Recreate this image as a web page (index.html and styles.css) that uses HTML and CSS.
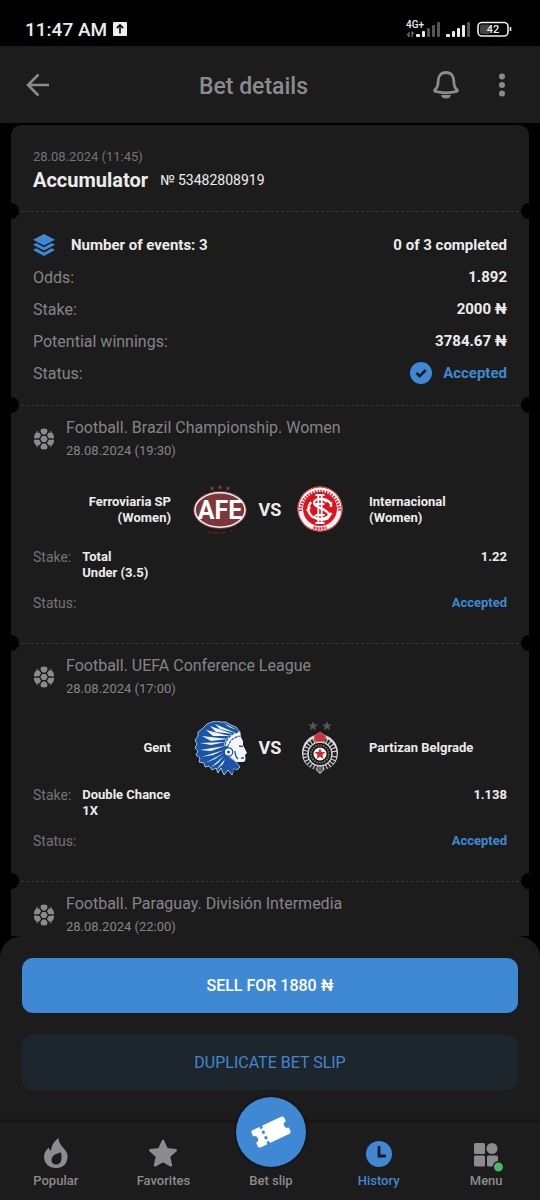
FILE: index.html
```html
<!DOCTYPE html>
<html lang="en">
<head>
    <meta charset="utf-8">
    <meta name="viewport" content="width=device-width, initial-scale=1">
    <title>Bet details</title>
    <link rel="stylesheet" href="styles.css">
</head>
<body>
    <!-- shared icons -->
    <svg class="defs" width="0" height="0" aria-hidden="true">
        <symbol id="ball" viewBox="0 0 22 22">
            <circle cx="11" cy="11" r="10.4" fill="#8b8b8d"/>
            <path d="M8.800 7.200h4.400L15.400 11l-2.200 3.800H8.800L6.600 11z" fill="none" stroke="#1c1c1c" stroke-width="1.400"/>
            <path d="M8.800 7.200 7 4.100M13.200 7.200 15 4.100M15.400 11H19M13.200 14.800l1.800 3.100M8.800 14.800 7 17.900M6.600 11H3" stroke="#1c1c1c" stroke-width="1.400"/>
            <path d="M7.300 4.500 8.200 0H6L4.500 5zM14.700 4.500 13.800 0H16l1.500 5zM18.500 11 22 9.500v3zM14.700 17.500l-.9 4.500H16l1.500-5zM7.300 17.500 8.200 22H6l-1.500-5zM3.500 11 0 9.500v3z" fill="#1c1c1c"/>
        </symbol>
    </svg>

    <div class="statusbar">
        <span class="clock">11:47 AM</span>
        <svg width="14" height="14" viewBox="0 0 14 14" aria-hidden="true">
            <rect width="14" height="14" rx="1" fill="#eee"/>
            <path d="M7 11.5V3M3.8 6.2 7 3l3.2 3.2" fill="none" stroke="#111" stroke-width="1.7"/>
        </svg>
        <svg class="signal" width="106" height="20" viewBox="0 0 106 20" aria-hidden="true">
            <text x="0" y="9" class="net">4G+</text>
            <path d="M3 18v-5M1.2 15 3 17.5M6 12.5V18M6 12.5 7.8 15" stroke="#777" stroke-width="1.2"/>
            <g fill="#eee">
                <rect x="10" y="15" width="4" height="3" rx="1"/><rect x="16" y="12" width="3" height="6" rx="1"/>
                <rect x="40" y="15" width="4" height="3" rx="1"/><rect x="46" y="12" width="3" height="6" rx="1"/>
                <rect x="51" y="9" width="3" height="9" rx="1"/><rect x="56" y="6" width="3" height="12" rx="1"/>
            </g>
            <g fill="#555">
                <rect x="21" y="9" width="3" height="9" rx="1"/><rect x="26" y="6" width="3" height="12" rx="1"/>
                <rect x="31" y="3" width="3" height="15" rx="1"/><rect x="61" y="3" width="3" height="15" rx="1"/>
            </g>
            <rect x="72" y="3.5" width="30" height="13.5" rx="4" fill="none" stroke="#eee" stroke-width="1.6"/>
            <rect x="74" y="5.5" width="10" height="9.500" rx="2" fill="#444"/>
            <path d="M104.500 8v4" stroke="#eee" stroke-width="1.6"/>
            <text x="87" y="14" class="charge">42</text>
        </svg>
    </div>

    <header class="topbar">
        <button class="icon-btn" aria-label="Back">
            <svg width="24" height="24" viewBox="0 0 24 24"><path d="M23 12H2M12.500 1.500 2 12l10.500 10.500" fill="none" stroke="#8b8b8d" stroke-width="2.6"/></svg>
        </button>
        <h1>Bet details</h1>
        <div class="actions">
            <button class="icon-btn" aria-label="Notifications">
                <svg width="28" height="30" viewBox="0 0 28 30"><path d="M14 2.500C9 2.500 6.200 6 6.200 11c0 5-.7 7-3.600 9.200 0 .6 0 1 .6 1.200 7 1.800 14.600 1.800 21.600 0 .6-.2.6-.6.6-1.200-2.900-2.200-3.600-4.200-3.600-9.200 0-5-2.800-8.500-7.800-8.500z" fill="none" stroke="#8b8b8d" stroke-width="2.8" stroke-linejoin="round"/><path d="M9 25h10c-.5 2.500-2 3.500-5 3.500S9.500 27.500 9 25z" fill="#8b8b8d"/></svg>
            </button>
            <button class="icon-btn" aria-label="More">
                <svg width="8" height="24" viewBox="0 0 8 24" fill="#8b8b8d"><circle cx="4" cy="3.500" r="3"/><circle cx="4" cy="12" r="3"/><circle cx="4" cy="20.500" r="3"/></svg>
            </button>
        </div>
    </header>

    <main class="slip">
        <section class="slip-head">
            <time>28.08.2024 (11:45)</time>
            <div class="slip-title"><h2>Accumulator</h2><span>№ 53482808919</span></div>
        </section>

        <section class="summary notched">
            <div class="row row-events">
                <svg width="22" height="22" viewBox="0 0 22 22" fill="#3f88d4" aria-hidden="true">
                    <path d="M11 0 22 5.800 11 11.600 0 5.800z"/>
                    <path d="M0 10.800 3.200 9.100 11 13.200l7.800-4.100 3.200 1.700-11 5.800z"/>
                    <path d="M0 16 3.200 14.300 11 18.400l7.800-4.100L22 16l-11 6z"/>
                </svg>
                <span>Number of events: 3</span>
                <strong>0 of 3 completed</strong>
            </div>
            <div class="row"><span>Odds:</span><strong>1.892</strong></div>
            <div class="row"><span>Stake:</span><strong>2000 ₦</strong></div>
            <div class="row"><span>Potential winnings:</span><strong>3784.67 ₦</strong></div>
            <div class="row"><span>Status:</span>
                <strong class="accepted">
                    <svg width="22" height="22" viewBox="0 0 22 22" aria-hidden="true"><circle cx="11" cy="11" r="11" fill="#3f88d4"/><path d="m6.500 11 3.200 3.200 6-6.200" fill="none" stroke="#1c1c1c" stroke-width="2.600"/></svg>
                    Accepted
                </strong>
            </div>
        </section>

        <article class="event notched">
            <div class="event-head">
                <svg width="22" height="22" aria-hidden="true"><use href="#ball"/></svg>
                <div><h3>Football. Brazil Championship. Women</h3><time>28.08.2024 (19:30)</time></div>
            </div>
            <div class="teams">
                <span class="home">Ferroviaria SP (Women)</span>
                <svg class="crest" viewBox="0 0 54 54" aria-hidden="true">
                    <g fill="#8a3c40">
                        <path id="st" d="m19 3 .7 1.400 1.500.2-1.100 1.100.3 1.500-1.400-.7-1.400.7.3-1.500-1.100-1.100 1.500-.2z"/>
                        <use href="#st" x="8" y="-1"/><use href="#st" x="16"/>
                    </g>
                    <ellipse cx="27" cy="27" rx="26.800" ry="19" fill="#7e363b"/>
                    <ellipse cx="27" cy="27" rx="25" ry="17.200" fill="#7e363b" stroke="#eee" stroke-width="1.600"/>
                    <text class="afe" x="27" y="36">AFE</text>
                    <path d="M15 49q12 2 18 0M37 48h3" fill="none" stroke="#4b2326" stroke-width="1.500"/>
                </svg>
                <span class="vs">VS</span>
                <svg class="crest" viewBox="0 0 54 54" aria-hidden="true">
                    <circle cx="27" cy="26" r="22.500" fill="#f4f4f4"/>
                    <path d="M7.500 28A19.500 19.500 0 1 1 46.500 28" fill="none" stroke="#e02229" stroke-width="3" stroke-dasharray="1.500 1.300"/>
                    <circle cx="27" cy="26" r="22" fill="none" stroke="#e0232b" stroke-width="1"/>
                    <circle cx="27" cy="26" r="17" fill="#e0121b"/>
                    <path d="M20.500 44.500q6.500 2 13 0" fill="none" stroke="#e0232b" stroke-width="2.500" stroke-dasharray="2 1"/>
                    <g fill="none" stroke="#fff" stroke-width="2.400">
                        <path d="M25.300 12v28M28.700 12v28M22.500 12h9M22.500 40h9M22.500 21h9M22.500 32h9" stroke-width="1.800"/>
                        <path d="M34 19c-3-4-13-4-13 1s15 6 15 12-11 6-15 1"/>
                        <path d="M38 21c-3-5-8-5-10-5M18 19c-6 8-1 17 9.500 17 6 0 9-3 11-6M17 24l-3 4M38 19v5"/>
                    </g>
                </svg>
                <span class="away">Internacional (Women)</span>
            </div>
            <div class="pick"><span>Stake:</span><strong>Total<br>Under (3.5)</strong><strong class="odd">1.22</strong></div>
            <div class="pick state"><span>Status:</span><strong class="accepted">Accepted</strong></div>
        </article>

        <article class="event notched">
            <div class="event-head">
                <svg width="22" height="22" aria-hidden="true"><use href="#ball"/></svg>
                <div><h3>Football. UEFA Conference League</h3><time>28.08.2024 (17:00)</time></div>
            </div>
            <div class="teams">
                <span class="home">Gent</span>
                <svg class="crest" viewBox="0 0 54 54" aria-hidden="true">
                    <!-- headdress -->
                    <path d="m14 3 5-2 4-1 5 1 5 0 5 3 5 2 4 5 1 7-8 4-4 14 6 4 5 6-3 3-3-2-2 7-4-5-4 5-3-7-3 5-2-5-4 2-3-4-4 1-1-4-5-1 1-4-4-3 2-4-3-3 2-4-2-4 3-4 0-4 4-3z" fill="#1a55a5" stroke="#cfdbe8" stroke-width=".8"/>
                    <!-- feathers -->
                    <path d="m43 12-21-9 5 5zM40 13 17 5l6 6zM37 15 13 9l7 6zM35 18 9 15l9 5zM33 21 7 22l11 2zM32 25 7 29l11 1zM31 29 8 36l12-2zM31 32 12 42l10-4zM31 35 17 47l8-5zM32 38 23 49l7-6zM44 9 31 2l5 4z" fill="#f2f5f8"/>
                    <!-- face -->
                    <path d="M35 27c1-6 5-11 12-12l3 5v4l4 8-2 2 .5 3c.3 2-.5 4-3 4l-6 0-5-4-4-4z" fill="#f3f5f7"/>
                    <path d="M33 25c2-7 6-11 14-12" fill="none" stroke="#f3f5f7" stroke-width="5"/>
                    <path d="M32 24c2-7 6-11 13-13M34.500 26c2-6 6-10 13-11" fill="none" stroke="#1a55a5" stroke-width="1.200" stroke-dasharray="3 1"/>
                    <path d="m46 25 4 .5M48 37h3M42 30c0 4 1 6 3 8M39 43l1 8 4-7M34 41l-3 9 7-6" fill="none" stroke="#1a55a5" stroke-width="1.300"/>
                    <circle cx="35.500" cy="31" r="4.200" fill="#fff" stroke="#1a55a5" stroke-width="1.300"/>
                    <circle cx="35.500" cy="31" r="1.500" fill="#1a55a5"/>
                </svg>
                <span class="vs">VS</span>
                <svg class="crest" viewBox="0 0 54 54" aria-hidden="true">
                    <g fill="#55585b">
                        <path id="star" d="m20 .2 1.300 3.200 3.500.2-2.700 2.200.9 3.400-3-1.900-3 1.900.9-3.400-2.700-2.200 3.500-.2z"/>
                        <use href="#star" x="14"/>
                    </g>
                    <path d="M27 13C16 14 9 22 9 32c0 9 6 15 14 17l4 4 4-4c8-2 14-8 14-17 0-10-7-18-18-19z" fill="#d8d8d8"/>
                    <circle cx="27" cy="33" r="14.600" fill="none" stroke="#222" stroke-width="4" stroke-dasharray="2.200 1.100"/>
                    <circle cx="27" cy="33" r="11.800" fill="#151515" stroke="#ddd" stroke-width="1"/>
                    <circle cx="27" cy="33" r="8.800" fill="none" stroke="#69706c" stroke-width="2" stroke-dasharray="1.600 1"/>
                    <circle cx="27" cy="33" r="6.500" fill="#fff"/>
                    <path d="m27 27 1.500 4 4.200.2-3.300 2.600 1.100 4.100-3.500-2.300-3.500 2.300 1.100-4.100-3.300-2.600 4.200-.2z" fill="#dc1f2c"/>
                    <path d="M22.500 20.500 21 15l3-2 3-2 3 2 3 2-1.500 5.500z" fill="#c9343b" stroke="#e57377" stroke-width=".7"/>
                    <path d="M24 46h6v3l-3 3-3-3z" fill="#666"/>
                </svg>
                <span class="away">Partizan Belgrade</span>
            </div>
            <div class="pick"><span>Stake:</span><strong>Double Chance<br>1X</strong><strong class="odd">1.138</strong></div>
            <div class="pick state"><span>Status:</span><strong class="accepted">Accepted</strong></div>
        </article>

        <article class="event notched">
            <div class="event-head">
                <svg width="22" height="22" aria-hidden="true"><use href="#ball"/></svg>
                <div><h3>Football. Paraguay. División Intermedia</h3><time>28.08.2024 (22:00)</time></div>
            </div>
        </article>
    </main>

    <div class="sheet">
        <button class="btn btn-sell">SELL FOR 1880 ₦</button>
        <button class="btn btn-copy">DUPLICATE BET SLIP</button>
    </div>

    <nav class="tabs">
        <a href="#popular">
            <svg width="32" height="32" viewBox="0 0 32 32" fill="#8b8b90"><path d="M18.500 1c-4.500 3.500-7 7-7.500 12.500-1.500-.5-2-1.500-2.200-3C5.500 13.500 4 16.500 4 20c0 6.500 5 11 12 11s11.600-4.500 11.600-11.500c0-8-8.600-9-9.100-18.500z"/><path d="M21 15.500c-4.500.8-9.500 3-9.500 7.500 0 3 2 4.600 4.700 4.600 4.800 0 6.300-5.600 4.800-12.100z" fill="#1c1c1c"/></svg>
            <span>Popular</span>
        </a>
        <a href="#favorites">
            <svg width="32" height="32" viewBox="0 0 32 32"><path d="m16 4 3.700 8.300 9 1-6.700 6.100 1.900 8.900-7.900-4.500-7.900 4.500 1.900-8.900-6.700-6.100 9-1z" fill="#8b8b90" stroke="#8b8b90" stroke-width="2.500" stroke-linejoin="round"/></svg>
            <span>Favorites</span>
        </a>
        <a href="#betslip">
            <span class="fab">
                <svg width="42" height="42" viewBox="0 0 42 42"><g transform="rotate(-25 21 21)"><path d="M5.500 11.500h31a2.500 2.500 0 0 1 2.500 2.500v3.500a3.500 3.500 0 0 0 0 7V28a2.500 2.500 0 0 1-2.500 2.500h-31A2.500 2.500 0 0 1 3 28v-3.500a3.500 3.500 0 0 0 0-7V14a2.500 2.500 0 0 1 2.500-2.500z" fill="#fff"/><path d="M14 10.500v3.500M14 16.500v3M14 22.500v3M14 28v3.500" stroke="#3f88d4" stroke-width="2.800"/></g></svg>
            </span>
            <span>Bet slip</span>
        </a>
        <a href="#history" class="active" aria-current="page">
            <svg width="32" height="32" viewBox="0 0 32 32"><circle cx="16" cy="17" r="13" fill="#3f88d4"/><path d="M16 9v10h7" fill="none" stroke="#1c1c1c" stroke-width="2.800"/></svg>
            <span>History</span>
        </a>
        <a href="#menu">
            <svg class="menu-icon" width="32" height="32" viewBox="0 0 32 32" fill="#8b8b90"><rect x="4" y="6" width="11" height="11" rx="1.500"/><circle cx="22" cy="11.500" r="5.500"/><rect x="4" y="18.500" width="11" height="11" rx="1.500"/><rect x="17" y="18.500" width="11" height="11" rx="1.500"/><circle cx="28.500" cy="30" r="5.200" fill="#4ab866" stroke="#1c1c1c" stroke-width="1.400"/></svg>
            <span>Menu</span>
        </a>
    </nav>
</body>
</html>
```
FILE: styles.css
```css
* { box-sizing: border-box; }
body {
    margin: 0;
    height: 100vh;
    display: flex;
    flex-direction: column;
    background: #000;
    color: #ececec;
    font-family: Roboto, "Liberation Sans", sans-serif;
    font-size: 16px;
}
h1, h2, h3 { margin: 0; }
button { font-family: inherit; border: 0; cursor: pointer; }
svg { display: block; flex: none; }
.defs { position: absolute; }

.statusbar {
    flex: none;
    display: flex;
    align-items: center;
    gap: 6px;
    height: 46px;
    padding: 12px 28px 0 25px;
}
.clock { font-size: 19px; font-weight: 500; }
.signal { margin-left: auto; }
.signal text { fill: #eee; font-weight: 500; }
.signal .net { font-size: 10px; }
.signal .charge { font-size: 11px; text-anchor: middle; }

.topbar {
    flex: none;
    display: grid;
    grid-template-columns: auto 1fr auto;
    align-items: center;
    height: 77px;
    margin-bottom: 2px;
    padding: 0 34px 0 26px;
    background: #1c1c1c;
}
.topbar h1 {
    padding: 3px 0 0 25px;
    color: #8b8b8d;
    font-size: 23px;
    font-weight: 500;
    text-align: center;
}
.icon-btn { padding: 0; background: none; }
.actions { display: flex; align-items: center; gap: 38px; }

.slip {
    flex: 1;
    min-height: 0;
    overflow: hidden;
    margin: 0 11px;
    border-radius: 10px 10px 0 0;
    background: #1c1c1c;
}
.slip time { display: block; color: #858587; font-size: 13px; }
.slip-head { height: 86px; padding: 22px 22px 0; }
.slip .slip-head time { line-height: 20px; color: #747476; }
.slip-title { display: flex; align-items: center; gap: 12px; line-height: 26px; }
.slip-title h2 { font-size: 20px; font-weight: 700; }
.slip-title span { font-size: 14px; }

/* ticket tear line: dashed rule with a bite on each side */
.notched {
    position: relative;
    background: repeating-linear-gradient(90deg, #353535 0 3px, transparent 3px 5px) 10px 0 / calc(100% - 20px) 1px no-repeat;
}
.notched::before,
.notched::after {
    content: "";
    position: absolute;
    top: -8px;
    width: 16px;
    height: 16px;
    border-radius: 50%;
    background: #000;
}
.notched::before { left: -8px; }
.notched::after { right: -8px; }

.summary { padding: 18px 22px 16px; }
.row { display: flex; align-items: center; height: 32px; color: #858587; }
.row strong { margin-left: auto; color: #ececec; font-size: 15px; font-weight: 700; }
.row-events { gap: 16px; color: #ececec; font-size: 15px; font-weight: 700; }
.row .accepted { display: flex; align-items: center; gap: 11px; }
.slip .accepted { color: #3f88d4; }

.event { padding: 11px 22px 32px; }
.event-head { display: flex; align-items: center; gap: 11px; }
.event-head h3 { color: #858587; font-size: 16px; font-weight: 400; line-height: 24px; }
.event-head time { line-height: 22px; }
.teams {
    display: grid;
    grid-template-columns: 1fr 54px 46px 54px 1fr;
    align-items: center;
    margin: 21px 0 12px;
    font-size: 13px;
    font-weight: 700;
    line-height: 16px;
}
.home { padding: 0 22px 0 20px; text-align: right; }
.away { padding: 0 20px 0 22px; }
.vs { text-align: center; font-size: 18px; }
.crest { width: 54px; height: 54px; }
.afe { fill: #fff; font-size: 25px; font-weight: 700; text-anchor: middle; }

.pick { display: flex; gap: 11px; font-size: 14px; line-height: 16px; }
.pick span { color: #747476; }
.pick strong { font-size: 13px; font-weight: 700; }
.pick .odd, .state .accepted { margin-left: auto; }
.state { margin-top: 14px; }

.sheet {
    flex: none;
    display: grid;
    gap: 22px;
    padding: 22px 22px 32px;
    border-radius: 22px 22px 0 0;
    background: #1c1c1c;
}
.btn { height: 55px; border-radius: 11px; font-size: 16px; font-weight: 500; }
.btn-sell { background: #3f88d4; color: #fff; }
.btn-copy { background: #1e262d; color: #3f88d4; font-weight: 400; }

.tabs {
    flex: none;
    display: grid;
    grid-template-columns: repeat(5, 1fr);
    height: 78px;
    padding-left: 2px;
    background: #1c1c1c;
    box-shadow: 0 -1px 3px #0008;
}
.tabs a {
    position: relative;
    display: flex;
    flex-direction: column;
    align-items: center;
    justify-content: flex-end;
    gap: 2px;
    padding-bottom: 9px;
    color: #8b8b90;
    font-size: 13px;
    font-weight: 500;
    line-height: 20px;
    text-decoration: none;
}
.tabs .active { color: #3f88d4; }
.menu-icon { overflow: visible; }
.fab {
    position: absolute;
    top: -25px;
    display: flex;
    align-items: center;
    justify-content: center;
    width: 70px;
    height: 70px;
    border-radius: 50%;
    background: #3f88d4;
    box-shadow: 0 0 3px #000;
}
```
